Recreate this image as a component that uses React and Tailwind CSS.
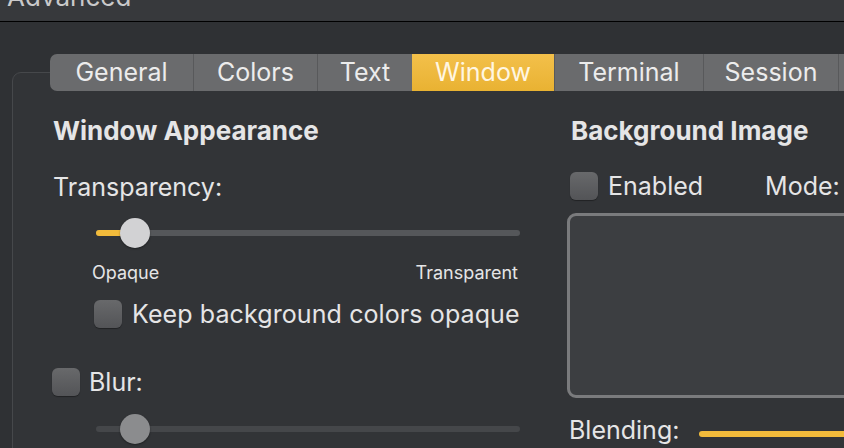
const tabs = [
  { name: 'General', w: 'w-[143px]' },
  { name: 'Colors', w: 'w-[124px]' },
  { name: 'Text', w: 'w-[95px]' },
  { name: 'Window', w: 'w-[142px]', active: true },
  { name: 'Terminal', w: 'w-[149px]' },
  { name: 'Session', w: 'w-[135px]' },
  { name: 'Keys', w: 'w-[120px]' },
];

function Checkbox() {
  return (
    <span className="block h-[28px] w-[28px] shrink-0 rounded-[6px] bg-gradient-to-b from-[#68696b] to-[#535457] shadow-[0_1px_1px_rgba(0,0,0,0.35)]" />
  );
}

function Slider({ fill, knob, dim }) {
  return (
    <div className="relative flex h-[30px] w-[424px] items-center">
      <div className={'h-[6px] w-full rounded-full ' + (dim ? 'bg-[#45474a]' : 'bg-[#55575a]')} />
      {fill && <div className="absolute left-0 top-[12px] h-[6px] w-[28px] rounded-full bg-[#f2bb3b]" />}
      <div
        className={'absolute top-0 left-[24px] h-[30px] w-[30px] rounded-full shadow-[0_1px_2px_rgba(0,0,0,0.4)] ' + (knob || 'bg-[#d2d2d4]')}
      />
    </div>
  );
}

export default function App() {
  return (
    <div className="h-[448px] w-[844px] overflow-hidden bg-[#2f3134] font-['Inter',sans-serif] text-[#e5e5e6]">
      <div className="h-[22px] overflow-hidden border-b border-black bg-[#37393c]">
        <div className="-mt-[16px] whitespace-nowrap pl-[7px] text-[26px] leading-[26px] text-[#c9c9ca]">Advanced</div>
      </div>

      <div className="pl-[12px] pt-[32px]">
        <div className="relative z-10 ml-[38px] flex h-[37px] overflow-hidden rounded-l-[7px] bg-[#6a6b6d]">
          {tabs.map(function (t, i) {
            return (
              <div
                key={t.name}
                className={
                  'flex shrink-0 items-center justify-center whitespace-nowrap text-[25px] ' + t.w + ' ' +
                  (t.active
                    ? 'bg-gradient-to-b from-[#f3c04a] to-[#e9b232] text-[#fff6e2]'
                    : 'text-[#ececec] ' + (i > 0 ? 'border-l border-[#58595b]' : ''))
                }
              >
                {t.name}
              </div>
            );
          })}
        </div>

        <div className="-mt-[19px] h-[420px] w-[900px] rounded-[9px] border border-[#46484b] bg-[#323437] pl-[40px] pt-[42px]">
          <div className="flex">
            {/* left column */}
            <div className="flex w-[467px] shrink-0 flex-col">
              <div className="whitespace-nowrap text-[26px] font-bold leading-[32px]">Window Appearance</div>
              <div className="mt-[24px] text-[25px] leading-[32px]">Transparency:</div>
              <div className="ml-[43px] mt-[15px]">
                <Slider fill />
              </div>
              <div className="ml-[39px] mt-[14px] flex w-[426px] justify-between text-[18px] leading-[22px]">
                <span>Opaque</span>
                <span>Transparent</span>
              </div>
              <div className="ml-[41px] mt-[16px] flex items-center gap-[10px]">
                <Checkbox />
                <span className="whitespace-nowrap text-[25px] leading-[28px] tracking-[0.1px]">Keep background colors opaque</span>
              </div>
              <div className="-ml-[1px] mt-[40px] flex items-center gap-[9px]">
                <Checkbox />
                <span className="text-[25px] leading-[28px]">Blur:</span>
              </div>
              <div className="ml-[43px] mt-[18px]">
                <Slider dim knob="bg-[#8b8c8e]" />
              </div>
            </div>

            {/* right column */}
            <div className="ml-[47px] flex shrink-0 flex-col">
              <div className="whitespace-nowrap pl-[4px] text-[26px] font-bold leading-[32px]">Background Image</div>
              <div className="ml-[3px] mt-[25px] flex items-center whitespace-nowrap">
                <Checkbox />
                <span className="ml-[10px] text-[25px] leading-[28px]">Enabled</span>
                <span className="ml-[62px] text-[25px] leading-[28px]">Mode:</span>
              </div>
              <div className="mt-[13px] h-[185px] w-[330px] rounded-[9px] border-[3px] border-[#7a7b7d] bg-[#3c3e41]" />
              <div className="ml-[2px] mt-[16px] flex items-center">
                <span className="whitespace-nowrap text-[25px] leading-[32px]">Blending:</span>
                <div className="ml-[20px] mt-[8px] h-[6px] w-[200px] rounded-full bg-[#f2bb3b]" />
              </div>
            </div>
          </div>
        </div>
      </div>
    </div>
  );
}
